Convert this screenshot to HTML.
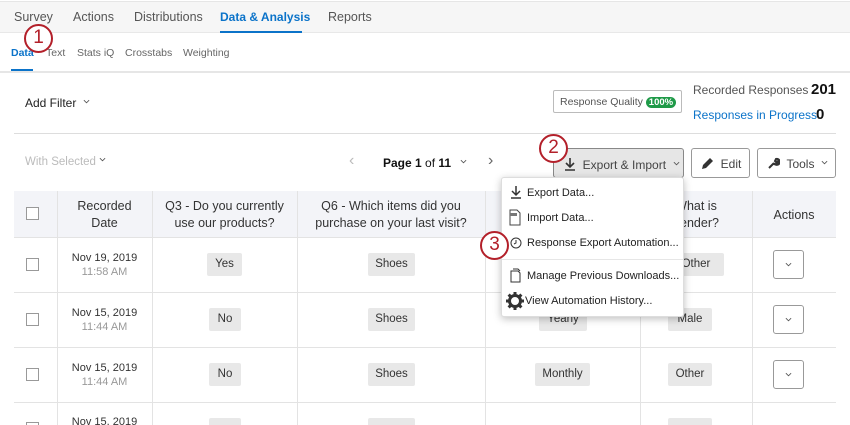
<!DOCTYPE html>
<html><head><style>
*{box-sizing:border-box;margin:0;padding:0}
html,body{width:850px;height:425px;overflow:hidden}
body{background:#fff;font-family:"Liberation Sans",sans-serif;color:#333;position:relative}
.a{position:absolute;white-space:nowrap}
.nav{left:0;top:1px;width:850px;height:32px;background:#f6f6f6;border-top:1px solid #e6e6e6;border-bottom:1px solid #e8e8e8}
.t{font-size:12.5px;color:#555}
.circ{width:29px;height:29px;border:2.5px solid #b3202a;border-radius:50%;background:#fff;color:#b3202a;font-size:19px;text-align:center;line-height:24px}
.btn{border:1px solid #999;border-radius:3px;background:#fff;height:29px;font-size:12px;color:#444}
.hdr{font-size:12.5px;color:#333;text-align:center;line-height:17px}
.cell{background:#e8e8e8;border-radius:2px;font-size:11.5px;color:#333;text-align:center;height:23px;line-height:23px}
.cb{width:13px;height:13px;border:1px solid #999;background:#fff}
.vl{width:1px;background:#e3e3e3}
.hl{height:1px;background:#e3e3e3;left:14px;width:822px}
.mi{font-size:11px;color:#222}
.chev{display:inline-block;width:7px;height:7px;vertical-align:2px}
</style></head><body>
<svg width="0" height="0" style="position:absolute"><defs><symbol id="cv" viewBox="0 0 8 5"><path d="M1 1l3 3 3-3" stroke="#555" stroke-width="1" fill="none"/></symbol></defs></svg>
<div class="a nav"></div>
<div class="a t" style="left:14px;top:10px">Survey</div>
<div class="a t" style="left:73px;top:10px">Actions</div>
<div class="a t" style="left:134px;top:10px">Distributions</div>
<div class="a t" style="left:220px;top:10px;color:#0b73c9;font-weight:bold;font-size:12px">Data &amp; Analysis</div>
<div class="a" style="left:220px;top:31px;width:82px;height:2px;background:#0b73c9"></div>
<div class="a t" style="left:328px;top:10px">Reports</div>
<div class="a t" style="left:11px;top:47px;font-size:10.5px;color:#0b73c9;font-weight:bold">Data</div>
<div class="a" style="left:11px;top:69px;width:22px;height:2px;background:#0b73c9"></div>
<div class="a t" style="left:46px;top:47px;font-size:10.5px;color:#666">Text</div>
<div class="a t" style="left:77px;top:47px;font-size:10.5px;color:#666">Stats iQ</div>
<div class="a t" style="left:125px;top:47px;font-size:10.5px;color:#666">Crosstabs</div>
<div class="a t" style="left:183px;top:47px;font-size:10.5px;color:#666">Weighting</div>
<div class="a" style="left:0;top:71px;width:850px;height:2px;background:#e6e6e6"></div>
<div class="a circ" style="left:24px;top:24px">1</div>

<div class="a" style="left:25px;top:96px;font-size:12px;color:#222">Add Filter <svg class="chev" style="margin-left:3px"><use href="#cv"/></svg></div>
<div class="a" style="left:553px;top:90px;width:129px;height:23px;border:1px solid #bbb;border-radius:2px;font-size:10.5px;color:#555;padding:5px 0 0 6px">Response Quality <span style="background:#1f9a48;color:#fff;border-radius:8px;padding:0 3px;font-size:9.5px;font-weight:bold">100%</span></div>
<div class="a" style="left:693px;top:83px;font-size:12px;color:#555">Recorded Responses</div>
<div class="a" style="left:811px;top:81px;font-size:15px;font-weight:bold;color:#111">201</div>
<div class="a" style="left:693px;top:108px;font-size:12px;color:#0b73c9">Responses in Progress</div>
<div class="a" style="left:816px;top:106px;font-size:15px;font-weight:bold;color:#111">0</div>
<div class="a" style="left:14px;top:133px;width:822px;height:1px;background:#ddd"></div>

<div class="a" style="left:25px;top:156px;font-size:11.5px;color:#bbb">With Selected <svg class="chev"><use href="#cv"/></svg></div>
<div class="a" style="left:349px;top:152px;font-size:16px;color:#bbb">&#8249;</div>
<div class="a" style="left:383px;top:156px;font-size:12px;color:#111"><b>Page 1</b> of <b>11</b> <svg class="chev" style="margin-left:6px"><use href="#cv"/></svg></div>
<div class="a" style="left:488px;top:152px;font-size:16px;color:#666">&#8250;</div>
<div class="a btn" style="left:553px;top:148px;width:131px;height:30px;background:#e6e6e6;border-color:#888;padding:8px 0 0 10px">
<svg width="12" height="14" style="vertical-align:-2px" viewBox="0 0 12 14"><path d="M6 1v9M2 6l4 4 4-4M1 13h10" stroke="#333" stroke-width="1.6" fill="none"/></svg>&nbsp; Export &amp; Import <svg class="chev" style="margin-left:4px"><use href="#cv"/></svg></div>
<div class="a btn" style="left:691px;top:148px;width:59px;height:30px;padding:8px 0 0 9px">
<svg width="13" height="13" style="vertical-align:-2px" viewBox="0 0 13 13"><path d="M1 12l1-4 7-7 3 3-7 7z" fill="#333"/></svg>&nbsp; Edit</div>
<div class="a btn" style="left:757px;top:148px;width:79px;height:30px;padding:8px 0 0 9px">
<svg width="13" height="13" style="vertical-align:-2px" viewBox="0 0 13 13"><path d="M2 11l5-5M7 6a3 3 0 1 0 2-4l-1 2 1 1 2-1a3 3 0 0 1-4 3" stroke="#333" stroke-width="2" fill="none"/></svg>&nbsp; Tools <svg class="chev" style="margin-left:3px"><use href="#cv"/></svg></div>
<div class="a circ" style="left:539px;top:134px">2</div>

<div class="a" style="left:14px;top:191px;width:822px;height:46px;background:#f3f4f8"></div>
<div class="a hl" style="top:237px"></div>
<div class="a hl" style="top:292px"></div>
<div class="a hl" style="top:347px"></div>
<div class="a hl" style="top:402px"></div>
<div class="a vl" style="left:57px;top:191px;height:234px"></div>
<div class="a vl" style="left:152px;top:191px;height:234px"></div>
<div class="a vl" style="left:297px;top:191px;height:234px"></div>
<div class="a vl" style="left:485px;top:191px;height:234px"></div>
<div class="a vl" style="left:640px;top:191px;height:234px"></div>
<div class="a vl" style="left:752px;top:191px;height:234px"></div>
<div class="a cb" style="left:26px;top:207px"></div>
<div class="a hdr" style="left:57px;top:198px;width:95px">Recorded<br>Date</div>
<div class="a hdr" style="left:152px;top:198px;width:145px">Q3 - Do you currently<br>use our products?</div>
<div class="a hdr" style="left:297px;top:198px;width:188px">Q6 - Which items did you<br>purchase on your last visit?</div>
<div class="a hdr" style="left:640px;top:198px;width:112px">What is<br>gender?</div>
<div class="a hdr" style="left:752px;top:207px;width:84px">Actions</div>

<div class="a cb" style="left:26px;top:258px"></div>
<div class="a hdr" style="left:57px;top:251px;width:95px;font-size:11px;line-height:14px">Nov 19, 2019<br><span style="color:#999">11:58 AM</span></div>
<div class="a cell" style="left:207px;top:253px;width:35px">Yes</div>
<div class="a cell" style="left:368px;top:253px;width:47px">Shoes</div>
<div class="a cell" style="left:668px;top:253px;width:56px">Other</div>
<div class="a btn" style="left:773px;top:250px;width:31px;height:29px;padding:10px 0 0 11px"><svg class="chev" style="vertical-align:top"><use href="#cv"/></svg></div>

<div class="a cb" style="left:26px;top:313px"></div>
<div class="a hdr" style="left:57px;top:306px;width:95px;font-size:11px;line-height:14px">Nov 15, 2019<br><span style="color:#999">11:44 AM</span></div>
<div class="a cell" style="left:209px;top:308px;width:32px">No</div>
<div class="a cell" style="left:368px;top:308px;width:47px">Shoes</div>
<div class="a cell" style="left:539px;top:308px;width:48px">Yearly</div>
<div class="a cell" style="left:668px;top:308px;width:44px">Male</div>
<div class="a btn" style="left:773px;top:305px;width:31px;height:29px;padding:10px 0 0 11px"><svg class="chev" style="vertical-align:top"><use href="#cv"/></svg></div>

<div class="a cb" style="left:26px;top:368px"></div>
<div class="a hdr" style="left:57px;top:361px;width:95px;font-size:11px;line-height:14px">Nov 15, 2019<br><span style="color:#999">11:44 AM</span></div>
<div class="a cell" style="left:209px;top:363px;width:32px">No</div>
<div class="a cell" style="left:368px;top:363px;width:47px">Shoes</div>
<div class="a cell" style="left:535px;top:363px;width:55px">Monthly</div>
<div class="a cell" style="left:668px;top:363px;width:44px">Other</div>
<div class="a btn" style="left:773px;top:360px;width:31px;height:29px;padding:10px 0 0 11px"><svg class="chev" style="vertical-align:top"><use href="#cv"/></svg></div>

<div class="a cb" style="left:26px;top:422px"></div>
<div class="a hdr" style="left:57px;top:415px;width:95px;font-size:11px;line-height:14px">Nov 15, 2019</div>
<div class="a cell" style="left:209px;top:418px;width:32px"></div>
<div class="a cell" style="left:368px;top:418px;width:47px"></div>
<div class="a cell" style="left:668px;top:418px;width:44px"></div>

<div class="a" style="left:501px;top:177px;width:183px;height:140px;background:#fff;border:1px solid #ddd;border-radius:3px;box-shadow:0 2px 8px rgba(0,0,0,.25)"></div>
<svg class="a" style="left:510px;top:185px" width="12" height="14" viewBox="0 0 12 14"><path d="M6 1v9M2 6l4 4 4-4M1 13h10" stroke="#333" stroke-width="1.5" fill="none"/></svg>
<div class="a mi" style="left:527px;top:187px">Export Data...</div>
<svg class="a" style="left:509px;top:209px" width="12" height="17" viewBox="0 0 12 17"><path d="M1 1h7l3 3v12H1z" stroke="#444" fill="none"/><rect x="1" y="4" width="7" height="3" fill="#777"/></svg>
<div class="a mi" style="left:527px;top:212px">Import Data...</div>
<svg class="a" style="left:510px;top:237px" width="12" height="12" viewBox="0 0 12 12"><circle cx="6" cy="6" r="5" stroke="#333" fill="none"/><path d="M6 3v3l-2 1" stroke="#333" fill="none"/></svg>
<div class="a mi" style="left:527px;top:237px">Response Export Automation...</div>
<div class="a" style="left:502px;top:259px;width:181px;height:1px;background:#e6e6e6"></div>
<svg class="a" style="left:510px;top:268px" width="11" height="15" viewBox="0 0 11 15"><path d="M1 3h7l2 2v9H1z M3 1h5l2 2" stroke="#333" fill="none"/></svg>
<div class="a mi" style="left:527px;top:270px">Manage Previous Downloads...</div>
<svg class="a" style="left:506px;top:292px" width="18" height="18" viewBox="0 0 18 18"><circle cx="9" cy="9" r="5.5" fill="none" stroke="#333" stroke-width="3"/><path d="M9 0v4M9 14v4M0 9h4M14 9h4M2.6 2.6l3 3M12.4 12.4l3 3M15.4 2.6l-3 3M5.6 12.4l-3 3" stroke="#333" stroke-width="3"/></svg>
<div class="a mi" style="left:525px;top:295px">View Automation History...</div>
<div class="a circ" style="left:480px;top:231px">3</div>
</body></html>
